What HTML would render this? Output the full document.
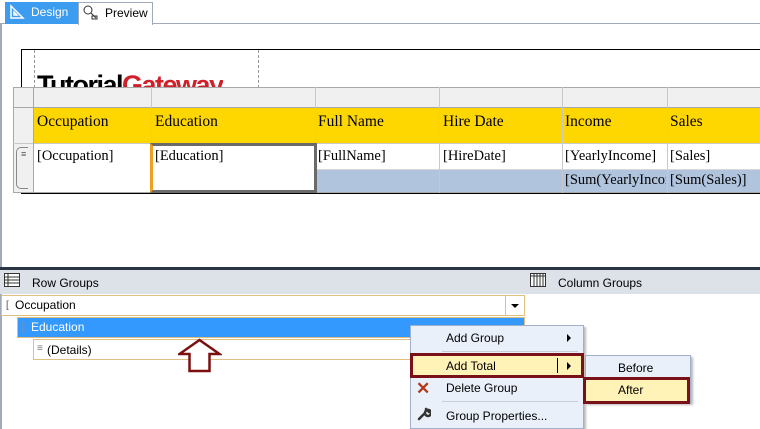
<!DOCTYPE html><html><head><style>
body{margin:0;width:760px;height:429px;position:relative;overflow:hidden;background:#fff;font-family:"Liberation Sans",sans-serif;font-size:12px;color:#000}
.a{position:absolute;box-sizing:border-box}
.serif{font-family:"Liberation Serif",serif;font-size:15.5px}
</style></head><body>
<div class="a" style="left:0;top:0;width:760px;height:24px;border-bottom:1px solid #a0aab8"></div>
<div class="a" style="left:5px;top:2px;width:73px;height:22px;background:#3c9cf0;color:#fff;padding:3px 0 0 26px;font-size:12px">Design</div>
<svg class="a" style="left:9px;top:4px" width="16" height="16"><path d="M2 2V14H14Z M5 8V11H8Z" fill="none" stroke="#fff" stroke-width="1.5"/></svg>
<div class="a" style="left:78px;top:2px;width:75px;height:23px;background:#fff;border:1px solid #a0aab8;border-bottom:none;padding:3px 0 0 26px">Preview</div>
<svg class="a" style="left:82px;top:4px" width="16" height="16"><circle cx="6" cy="6" r="4" fill="none" stroke="#333"/><path d="M9 9L14 14M10 12h5v3h-5z" stroke="#333" fill="none"/></svg>
<div class="a" style="left:0;top:24px;width:2px;height:245px;background:#a0aab8"></div>
<div class="a" style="left:21px;top:49px;width:745px;height:145px;border:1px solid #000;border-bottom:3px solid #000"></div>
<div class="a" style="left:34px;top:50px;width:1px;height:38px;border-left:1px dashed #999"></div>
<div class="a" style="left:258px;top:50px;width:1px;height:38px;border-left:1px dashed #999"></div>
<div class="a" style="left:37px;top:68px;height:19px;overflow:hidden;font:bold 27px 'Liberation Sans',sans-serif;line-height:34px;letter-spacing:-1.5px">Tutorial<span style="color:#d0202a">Gateway</span></div>
<!-- table -->
<div class="a" style="left:13px;top:87px;width:750px;height:106px;background:#f0f0f0;border:1px solid #a8a8a8"></div>
<div class="a" style="left:33px;top:107px;width:730px;height:36px;background:#ffd700"></div>
<div class="a" style="left:33px;top:143px;width:730px;height:26px;background:#fff"></div>
<div class="a" style="left:33px;top:169px;width:730px;height:23px;background:#fff"></div>
<div class="a" style="left:315px;top:169px;width:448px;height:23px;background:#b0c4de"></div>
<div class="a" style="left:13px;top:107px;width:750px;height:1px;background:#a8a8a8"></div>
<div class="a" style="left:13px;top:143px;width:750px;height:1px;background:#c8c8c8"></div>
<div class="a" style="left:315px;top:169px;width:448px;height:1px;background:#d8d8d8"></div>
<div class="a" style="left:33px;top:87px;width:1px;height:106px;background:#a8a8a8"></div>
<div class="a" style="left:151px;top:87px;width:1px;height:106px;background:#c8c8c8"></div>
<div class="a" style="left:315px;top:87px;width:1px;height:106px;background:#c8c8c8"></div>
<div class="a" style="left:439px;top:87px;width:1px;height:106px;background:#c8c8c8"></div>
<div class="a" style="left:562px;top:87px;width:1px;height:106px;background:#c8c8c8"></div>
<div class="a" style="left:667px;top:87px;width:1px;height:106px;background:#c8c8c8"></div>
<div class="a" style="left:150px;top:143px;width:167px;height:50px;border:3px solid #6a6a6a;border-left:3px solid #f0a020"></div>
<div class="a" style="left:16px;top:147px;width:12px;height:42px;border:1px solid #888;border-right:none;border-radius:5px 0 0 5px"></div>
<div class="a" style="left:21px;top:149px;font-size:9px;color:#555">≡</div>
<div class="a serif" style="left:37px;top:113px">Occupation</div>
<div class="a serif" style="left:155px;top:113px">Education</div>
<div class="a serif" style="left:318px;top:113px">Full Name</div>
<div class="a serif" style="left:443px;top:113px">Hire Date</div>
<div class="a serif" style="left:565px;top:113px">Income</div>
<div class="a serif" style="left:670px;top:113px">Sales</div>
<div class="a serif" style="left:37px;top:148px;font-size:14.5px">[Occupation]</div>
<div class="a serif" style="left:155px;top:148px;font-size:14.5px">[Education]</div>
<div class="a serif" style="left:318px;top:148px;font-size:14.5px">[FullName]</div>
<div class="a serif" style="left:443px;top:148px;font-size:14.5px">[HireDate]</div>
<div class="a serif" style="left:565px;top:148px;font-size:14.5px">[YearlyIncome]</div>
<div class="a serif" style="left:670px;top:148px;font-size:14.5px">[Sales]</div>
<div class="a serif" style="left:565px;top:172px;font-size:14.5px;width:101px;overflow:hidden;white-space:nowrap">[Sum(YearlyIncome)]</div>
<div class="a serif" style="left:670px;top:172px;font-size:14.5px">[Sum(Sales)]</div>
<!-- groups -->
<div class="a" style="left:0;top:267px;width:760px;height:3px;background:#293444"></div>
<div class="a" style="left:0;top:270px;width:760px;height:24px;background:#dde1e8"></div>
<svg class="a" style="left:4px;top:273px" width="16" height="14"><rect x="0.5" y="0.5" width="15" height="13" fill="#fff" stroke="#333"/><path d="M0 4h16M0 7h16M0 10h16M4 0v14" stroke="#333"/></svg>
<div class="a" style="left:32px;top:276px">Row Groups</div>
<svg class="a" style="left:530px;top:273px" width="16" height="14"><rect x="0.5" y="0.5" width="15" height="13" fill="#fff" stroke="#333"/><path d="M0 3h16M4 0v14M7 0v14M10 0v14M13 0v14" stroke="#333"/></svg>
<div class="a" style="left:558px;top:276px">Column Groups</div>
<div class="a" style="left:0;top:294px;width:2px;height:135px;background:#a0aab8"></div>
<div class="a" style="left:1px;top:295px;width:524px;height:21px;border:1px solid #e0c080;background:#fff;padding:2px 0 0 13px">Occupation</div>
<div class="a" style="left:6px;top:300px;font-size:10px;color:#555">[</div>
<div class="a" style="left:505px;top:295px;width:1px;height:21px;background:#e0c080"></div>
<div class="a" style="left:511px;top:304px;border:4px solid transparent;border-top:4px solid #000"></div>
<div class="a" style="left:17px;top:317px;width:508px;height:21px;background:#3399ff;border:1px solid #e0c080;color:#fff;padding:2px 0 0 13px">Education</div>
<div class="a" style="left:22px;top:322px;font-size:10px;color:#c08040">[</div>
<div class="a" style="left:33px;top:339px;width:492px;height:21px;border:1px solid #e0c080;padding:3px 0 0 13px">(Details)</div>
<div class="a" style="left:37px;top:343px;font-size:10px;color:#777">≡</div>
<svg class="a" style="left:178px;top:338px" width="44" height="35"><path d="M1.5 16L21.5 2L41.5 16H31.5V33H11.5V16Z" fill="#fff" stroke="#7a1010" stroke-width="2.5"/></svg>
<!-- context menu -->
<div class="a" style="left:410px;top:325px;width:174px;height:104px;background:#e9f0fa;border:1px solid #a0b0c8;box-shadow:2px 2px 2px #bbb"></div>
<div class="a" style="left:446px;top:331px">Add Group</div>
<div class="a" style="left:567px;top:334px;border:4px solid transparent;border-left:4px solid #000"></div>
<div class="a" style="left:442px;top:351px;width:136px;height:1px;background:#c8ccd4"></div>
<div class="a" style="left:410px;top:353px;width:174px;height:25px;background:#fff3b8;border:3px solid #7a1018"></div>
<div class="a" style="left:446px;top:359px">Add Total</div>
<div class="a" style="left:557px;top:358px;width:1px;height:15px;background:#000"></div>
<div class="a" style="left:567px;top:362px;border:4px solid transparent;border-left:4px solid #000"></div>
<div class="a" style="left:416px;top:379px;color:#b03a1a;font:bold 17px 'Liberation Sans',sans-serif">✕</div>
<div class="a" style="left:446px;top:381px">Delete Group</div>
<div class="a" style="left:442px;top:401px;width:136px;height:1px;background:#c8ccd4"></div>
<svg class="a" style="left:417px;top:407px" width="14" height="14"><path d="M2 12L8 6M8 6a3 3 0 1 0 0-0.1M9 2l3 3" stroke="#333" stroke-width="2.5" fill="none" stroke-linecap="round"/></svg>
<div class="a" style="left:446px;top:409px">Group Properties...</div>
<div class="a" style="left:585px;top:355px;width:106px;height:48px;background:#e9f0fa;border:1px solid #a0b0c8;box-shadow:2px 2px 2px #bbb"></div>
<div class="a" style="left:618px;top:361px">Before</div>
<div class="a" style="left:583px;top:377px;width:107px;height:27px;background:#fff3b8;border:3px solid #7a1018"></div>
<div class="a" style="left:618px;top:383px">After</div>
</body></html>
